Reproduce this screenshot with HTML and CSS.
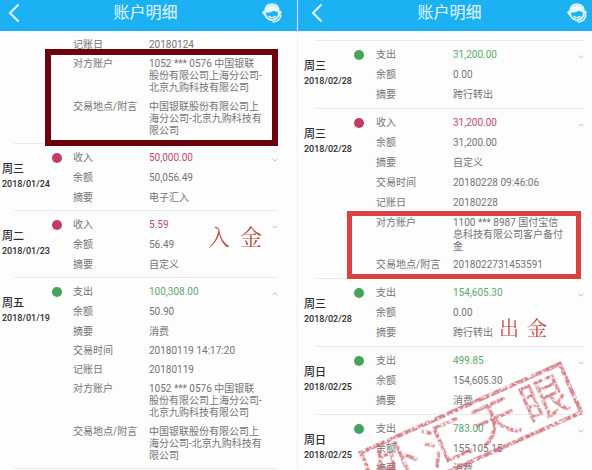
FILE: index.html
```html
<!DOCTYPE html>
<html lang="zh-CN">
<head>
<meta charset="utf-8">
<title>账户明细</title>
<link rel="stylesheet" href="styles.css">
</head>
<body>
<svg class="defs" aria-hidden="true">
  <defs>
    <filter id="ink" x="0" y="0" width="100%" height="100%">
      <feTurbulence type="fractalNoise" baseFrequency="0.35" numOctaves="2" seed="4" result="noise"/>
      <feColorMatrix in="noise" type="matrix" values="0 0 0 0 0  0 0 0 0 0  0 0 0 0 0  4 0 0 0 -1.2" result="grain"/>
      <feComposite in="SourceGraphic" in2="grain" operator="in"/>
    </filter>
    <symbol id="back" viewBox="0 0 12 20"><path d="M10.500 1.500L2 10l8.500 8.500" fill="none" stroke="currentColor" stroke-width="2"/></symbol>
    <symbol id="service" viewBox="0 0 22 22">
      <path d="M4 7.500C5 4 7.800 2 11 2s6 2 7 5.500" fill="none" stroke="currentColor" stroke-width="1.600"/>
      <circle cx="11" cy="11" r="7" fill="none" stroke="currentColor" stroke-width="1.800"/>
      <path d="M4 10.500C5 6 8 4.500 11 4.500s6 1.500 7 6c-2-.2-3.500-1-5-1.800-2.500 1.500-6 2.200-9 1.800z" fill="currentColor"/>
      <path d="M3.500 7.500L1 10.500l2.500 3.500zM18.500 7.500l2.500 3-2.500 3.500z" fill="currentColor"/>
      <path d="M7.500 14c2 2.200 5 2.200 7 0" fill="none" stroke="currentColor" stroke-width="1.200"/>
      <path d="M20 13c-1 4-4 7-8.500 7" fill="none" stroke="currentColor" stroke-width="1.500"/>
    </symbol>
    <symbol id="down" viewBox="0 0 6 4"><path d="M.5.800L3 3 5.500.800" fill="none" stroke="currentColor"/></symbol>
    <symbol id="up" viewBox="0 0 6 4"><path d="M.5 3.200L3 1l2.500 2.200" fill="none" stroke="currentColor"/></symbol>
  </defs>
</svg>
<main class="screens">
  <section class="screen screen-deposit">
    <header class="bar">
      <button class="icon-button" aria-label="返回"><svg class="back"><use href="#back"/></svg></button>
      <h1>账户明细</h1>
      <button class="icon-button" aria-label="客服"><svg class="service"><use href="#service"/></svg></button>
    </header>
    <div class="list">
      <article class="record continued">
        <div class="day"></div><div></div>
        <div class="fields">
          <dl class="detail"><div><dt>记账日</dt><dd>20180124</dd></div></dl>
          <dl class="detail marked dark">
            <div><dt>对方账户</dt><dd>1052 *** 0576 中国银联<br>股份有限公司上海分公司-<br>北京九购科技有限公司</dd></div>
            <div><dt>交易地点/附言</dt><dd>中国银联股份有限公司上<br>海分公司-北京九购科技有<br>限公司</dd></div>
          </dl>
        </div>
      </article>
      <hr>
      <article class="record">
        <div class="day"><strong>周三</strong><time>2018/01/24</time></div><i class="dot in"></i>
        <div class="fields"><dl class="summary">
          <div><dt>收入</dt><dd class="in">50,000.00</dd></div>
          <div><dt>余额</dt><dd>50,056.49</dd></div>
          <div><dt>摘要</dt><dd>电子汇入</dd></div>
        </dl></div>
        <button class="toggle" aria-label="展开"><svg><use href="#down"/></svg></button>
      </article>
      <hr>
      <article class="record">
        <div class="day"><strong>周二</strong><time>2018/01/23</time></div><i class="dot in"></i>
        <div class="fields"><dl class="summary">
          <div><dt>收入</dt><dd class="in">5.59</dd></div>
          <div><dt>余额</dt><dd>56.49</dd></div>
          <div><dt>摘要</dt><dd>自定义</dd></div>
        </dl></div>
        <button class="toggle" aria-label="展开"><svg><use href="#down"/></svg></button>
        <span class="note note-in"><span>入</span><span>金</span></span>
      </article>
      <hr>
      <article class="record">
        <div class="day"><strong>周五</strong><time>2018/01/19</time></div><i class="dot out"></i>
        <div class="fields">
          <dl class="summary">
            <div><dt>支出</dt><dd class="out">100,308.00</dd></div>
            <div><dt>余额</dt><dd>50.90</dd></div>
            <div><dt>摘要</dt><dd>消费</dd></div>
          </dl>
          <dl class="detail">
            <div><dt>交易时间</dt><dd>20180119 14:17:20</dd></div>
            <div><dt>记账日</dt><dd>20180119</dd></div>
          </dl>
          <dl class="detail">
            <div><dt>对方账户</dt><dd>1052 *** 0576 中国银联<br>股份有限公司上海分公司-<br>北京九购科技有限公司</dd></div>
            <div><dt>交易地点/附言</dt><dd>中国银联股份有限公司上<br>海分公司-北京九购科技有<br>限公司</dd></div>
          </dl>
        </div>
        <button class="toggle" aria-label="收起"><svg><use href="#up"/></svg></button>
      </article>
      <hr>
    </div>
  </section>

  <section class="screen screen-withdraw">
    <header class="bar">
      <button class="icon-button" aria-label="返回"><svg class="back"><use href="#back"/></svg></button>
      <h1>账户明细</h1>
      <button class="icon-button" aria-label="客服"><svg class="service"><use href="#service"/></svg></button>
    </header>
    <div class="list">
      <hr>
      <article class="record">
        <div class="day"><strong>周三</strong><time>2018/02/28</time></div><i class="dot out"></i>
        <div class="fields"><dl class="summary">
          <div><dt>支出</dt><dd class="out">31,200.00</dd></div>
          <div><dt>余额</dt><dd>0.00</dd></div>
          <div><dt>摘要</dt><dd>跨行转出</dd></div>
        </dl></div>
        <button class="toggle" aria-label="展开"><svg><use href="#down"/></svg></button>
      </article>
      <hr>
      <article class="record">
        <div class="day"><strong>周三</strong><time>2018/02/28</time></div><i class="dot in"></i>
        <div class="fields">
          <dl class="summary">
            <div><dt>收入</dt><dd class="in">31,200.00</dd></div>
            <div><dt>余额</dt><dd>31,200.00</dd></div>
            <div><dt>摘要</dt><dd>自定义</dd></div>
          </dl>
          <dl class="detail">
            <div><dt>交易时间</dt><dd>20180228 09:46:06</dd></div>
            <div><dt>记账日</dt><dd>20180228</dd></div>
          </dl>
          <dl class="detail marked bright">
            <div><dt>对方账户</dt><dd>1100 *** 8987 国付宝信<br>息科技有限公司客户备付<br>金</dd></div>
            <div><dt>交易地点/附言</dt><dd>2018022731453591</dd></div>
          </dl>
        </div>
        <button class="toggle" aria-label="收起"><svg><use href="#up"/></svg></button>
      </article>
      <hr>
      <article class="record">
        <div class="day"><strong>周三</strong><time>2018/02/28</time></div><i class="dot out"></i>
        <div class="fields"><dl class="summary">
          <div><dt>支出</dt><dd class="out">154,605.30</dd></div>
          <div><dt>余额</dt><dd>0.00</dd></div>
          <div><dt>摘要</dt><dd>跨行转出</dd></div>
        </dl></div>
        <button class="toggle" aria-label="展开"><svg><use href="#down"/></svg></button>
        <span class="note note-out"><span>出</span><span>金</span></span>
      </article>
      <hr>
      <article class="record">
        <div class="day"><strong>周日</strong><time>2018/02/25</time></div><i class="dot out"></i>
        <div class="fields"><dl class="summary">
          <div><dt>支出</dt><dd class="out">499.85</dd></div>
          <div><dt>余额</dt><dd>154,605.30</dd></div>
          <div><dt>摘要</dt><dd>消费</dd></div>
        </dl></div>
        <button class="toggle" aria-label="展开"><svg><use href="#down"/></svg></button>
      </article>
      <hr>
      <article class="record">
        <div class="day"><strong>周日</strong><time>2018/02/25</time></div><i class="dot out"></i>
        <div class="fields"><dl class="summary">
          <div><dt>支出</dt><dd class="out">783.00</dd></div>
          <div><dt>余额</dt><dd>155,105.15</dd></div>
          <div><dt>摘要</dt><dd>消费</dd></div>
        </dl></div>
        <button class="toggle" aria-label="展开"><svg><use href="#down"/></svg></button>
      </article>
    </div>
    <div class="stamp"><div class="stamp-ink"><span>外</span><span>汇</span><span>天</span><span>眼</span></div></div>
  </section>
</main>
</body>
</html>
```
FILE: styles.css
```css
* { box-sizing: border-box; }

body {
  margin: 0;
  background: #fdfdfd;
  color: #747474;
  font: 10px/12px Roboto, "Noto Sans CJK SC", sans-serif;
}

.defs { position: absolute; width: 0; height: 0; }

.screens {
  display: grid;
  grid-template-columns: 297fr 295fr;
  height: 100vh;
  overflow: hidden;
}

.screen {
  --detail-gap: 7px;
  --edge: 2px;
  --end: 19px;
  --label: 76px;
  --tail: 6px;
  --marker: 21px;
  position: relative;
  min-width: 0;
  overflow: hidden;
}

.screen-withdraw {
  --detail-gap: 8px;
  --edge: 6px;
  --end: 8px;
  --label: 77px;
  --tail: 7px;
  --marker: 22px;
  border-left: 1px solid #e4f5fd;
}

.bar {
  display: grid;
  grid-template-columns: 22px 1fr 22px;
  align-items: center;
  height: 31px;
  padding: 0 14px 5px 8px;
  background: #1cb1f2;
  color: #e6faff;
}

.screen-withdraw .bar { padding: 0 4px 5px 13px; }

.bar h1 {
  margin: 0;
  font-size: 16px;
  line-height: 24px;
  font-weight: 400;
  text-align: center;
}

button {
  display: flex;
  padding: 0;
  border: 0;
  background: none;
  color: inherit;
}

.back { width: 12px; height: 20px; }
.service { width: 22px; height: 22px; }

.list { padding-top: 8px; }
.screen-withdraw .list { padding-top: 9px; }

hr {
  height: 1px;
  margin: 0 var(--end) 0 calc(var(--edge) + 12px);
  border: 0;
  background: #e9e9e9;
}

.record {
  position: relative;
  display: grid;
  grid-template-columns: 50px var(--marker) 1fr 6px;
  align-items: start;
  padding: 8px var(--end) var(--tail) var(--edge);
}

.record.continued { padding-top: 0; }

.day {
  display: grid;
  gap: 2px;
  padding-top: 12px;
  color: #2c2c2c;
  white-space: nowrap;
}

.day strong { font-size: 11px; font-weight: 500; }
.day time { font-size: 9px; font-weight: 500; }

.dot {
  width: 10px;
  height: 10px;
  margin-top: 1px;
  border-radius: 50%;
}

.dot.in { background: #c23a6a; }
.dot.out { background: #45a35c; }

.fields { display: grid; gap: var(--detail-gap); }

dl { display: grid; margin: 0; }
.summary { gap: 8px; }
.detail { gap: var(--detail-gap); }
.marked { position: relative; gap: 7px; }
.marked.bright { gap: 6px; }

dl > div { display: grid; grid-template-columns: var(--label) 1fr; }
dt, dd { margin: 0; white-space: nowrap; }
dd.in { color: #c4496f; }
dd.out { color: #5aab6c; }

.marked::after {
  content: "";
  position: absolute;
  pointer-events: none;
}

.dark::after { inset: -9px -6px -9px -28px; border: 6px solid #6c020c; }
.bright::after { inset: -6px -3px -8px -29px; border: 5px solid #dc4144; }

.toggle { margin-top: 6px; color: #c4c4c4; }
.toggle svg { width: 6px; height: 4px; }

.note {
  position: absolute;
  display: flex;
  font-family: "Noto Serif CJK SC", "Noto Sans CJK SC", serif;
  opacity: 0.95;
}

.note-in { top: 13px; right: 35px; gap: 10px; color: #bf402f; font-size: 22px; line-height: 24px; }
.note-out { top: 37px; right: 45px; gap: 8px; color: #c93430; font-size: 20px; line-height: 24px; }

.stamp {
  position: absolute;
  top: 404px;
  right: 10px;
  width: 222px;
  transform: rotate(-24deg);
  pointer-events: none;
}

.stamp-ink {
  display: flex;
  justify-content: space-around;
  padding: 2px 0;
  border: 4px solid #cb5660;
  color: #cb5660;
  font-size: 46px;
  line-height: 45px;
  filter: url(#ink);
  opacity: 0.75;
}
```
